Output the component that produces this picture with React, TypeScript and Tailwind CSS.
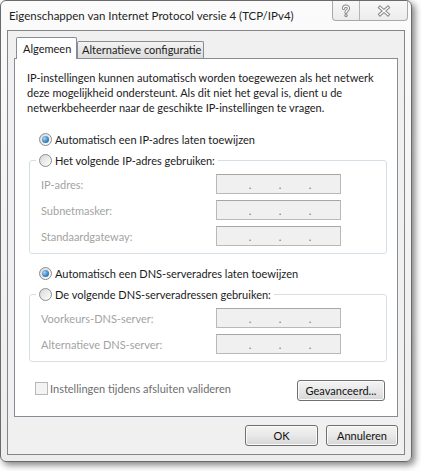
import React from "react";

const FONT = "font-['Lato',sans-serif]";

function Radio({ checked }: { checked?: boolean }) {
  return (
    <span className="w-[13px] h-[13px] rounded-full border border-[#8c8c8c] bg-gradient-to-br from-[#d8d8d8] to-[#ffffff] flex items-center justify-center shrink-0">
      {checked && (
        <span className="w-[7px] h-[7px] rounded-full bg-[radial-gradient(circle_at_35%_35%,#a8d4f5_0%,#3b86c8_55%,#1d5a9a_100%)]" />
      )}
    </span>
  );
}

function IpField() {
  return (
    <div className="w-[125px] h-[20px] border border-[#b9b9b9] border-t-[#a6a6a6] bg-[#f0f0f0] flex items-end pl-[18px] pb-[1px] text-[#777] leading-[14px]">
      <span className="w-[30px] text-center">.</span>
      <span className="w-[30px] text-center">.</span>
      <span className="w-[30px] text-center">.</span>
    </div>
  );
}

function FieldRow({ label }: { label: string }) {
  return (
    <div className="flex items-center h-[20px]">
      <span className="w-[175px] text-[#a3a3a3]">{label}</span>
      <IpField />
    </div>
  );
}

function Button({ children, w }: { children: React.ReactNode; w: string }) {
  return (
    <div
      className={`${w} h-[21px] rounded-[3px] border border-[#707070] bg-gradient-to-b from-[#f4f4f4] via-[#e8e8e8] to-[#d6d6d6] flex items-center justify-center text-[#111] shadow-[inset_0_0_0_1px_#fbfbfb]`}
    >
      {children}
    </div>
  );
}

function Group({ title, rows }: { title: string; rows: string[] }) {
  return (
    <fieldset className="ml-[14px] w-[358px] border border-[#d5dfe5] rounded-[3px] px-[11px] pt-[6px] pb-[7px] flex flex-col gap-[6px]">
      <legend className="ml-[-5px] px-[3px] h-[16px] flex items-center gap-[3px]">
        <Radio />
        <span>{title}</span>
      </legend>
      {rows.map((r) => (
        <FieldRow key={r} label={r} />
      ))}
    </fieldset>
  );
}

export default function App() {
  return (
    <div className={`w-[421px] h-[471px] bg-white ${FONT} text-[11px] text-[#1b1b1b] leading-[15px]`}>
      {/* window */}
      <div className="w-[412px] h-[462px] rounded-[6px] border border-[#6a6a6a] bg-gradient-to-b from-[#fbfbfb] to-[#ececec] shadow-[3px_3px_7px_rgba(0,0,0,0.5)] flex flex-col">
        {/* title bar */}
        <div className="h-[29px] flex items-start justify-between pl-[8px]">
          <span className="mt-[7px] text-[11.5px] text-[#1e1e1e] whitespace-nowrap">
            Eigenschappen van Internet Protocol versie 4 (TCP/IPv4)
          </span>
          <div className="mr-[3px] h-[20px] flex border border-t-0 border-[#a9a9a9] rounded-b-[4px] bg-gradient-to-b from-[#f8f8f8] to-[#ececec]">
            <div className="w-[27px] flex items-center justify-center border-r border-[#b5b5b5]">
              <svg width="10" height="14" viewBox="0 0 10 14">
                <path d="M2.5 4.5 C2.5 1.5 7.5 1.5 7.5 4.2 C7.5 6.2 5 6.4 5 8.6" fill="none" stroke="#8a8a8a" strokeWidth="3.2" strokeLinecap="round" />
                <circle cx="5" cy="11.6" r="1.7" fill="#8a8a8a" />
                <path d="M2.5 4.5 C2.5 1.5 7.5 1.5 7.5 4.2 C7.5 6.2 5 6.4 5 8.6" fill="none" stroke="#ffffff" strokeWidth="1.2" strokeLinecap="round" />
                <circle cx="5" cy="11.6" r="0.6" fill="#ffffff" />
              </svg>
            </div>
            <div className="w-[47px] flex items-center justify-center">
              <svg width="14" height="12" viewBox="0 0 14 12">
                <path d="M3 2.5 L11 9.5 M11 2.5 L3 9.5" stroke="#8a8a8a" strokeWidth="3.4" strokeLinecap="square" />
                <path d="M3 2.5 L11 9.5 M11 2.5 L3 9.5" stroke="#ffffff" strokeWidth="1.4" strokeLinecap="square" />
              </svg>
            </div>
          </div>
        </div>

        {/* client area */}
        <div className="mx-[6px] h-[425px] border border-[#858585] bg-[#f0f0f0] px-[6px] pt-[6px]">
          {/* tabs */}
          <div className="h-[21px] flex items-end pl-[2px]">
            <div className="relative z-10 w-[61px] h-[22px] -mb-px border border-b-0 border-[#898c95] rounded-t-[2px] bg-white pl-[6px] pt-[3px]">
              Algemeen
            </div>
            <div className="w-[127px] h-[17px] border border-b-0 border-[#898c95] rounded-t-[2px] bg-gradient-to-b from-[#f3f3f3] to-[#dcdcdc] pl-[4px] leading-[16px]">
              Alternatieve configuratie
            </div>
          </div>

          {/* tab panel */}
          <div className="h-[359px] border border-[#898c95] bg-white flex flex-col">
            <p className="pl-[12px] pt-[11px] whitespace-nowrap">
              IP-instellingen kunnen automatisch worden toegewezen als het netwerk
              <br />
              deze mogelijkheid ondersteunt. Als dit niet het geval is, dient u de
              <br />
              netwerkbeheerder naar de geschikte IP-instellingen te vragen.
            </p>

            <div className="mt-[16px] ml-[24px] h-[16px] flex items-center gap-[3px]">
              <Radio checked />
              <span>Automatisch een IP-adres laten toewijzen</span>
            </div>

            <div className="mt-[5px]">
              <Group
                title="Het volgende IP-adres gebruiken:"
                rows={["IP-adres:", "Subnetmasker:", "Standaardgateway:"]}
              />
            </div>

            <div className="mt-[11px] ml-[24px] h-[16px] flex items-center gap-[3px]">
              <Radio checked />
              <span>Automatisch een DNS-serveradres laten toewijzen</span>
            </div>

            <div className="mt-[5px]">
              <Group
                title="De volgende DNS-serveradressen gebruiken:"
                rows={["Voorkeurs-DNS-server:", "Alternatieve DNS-server:"]}
              />
            </div>

            <div className="mt-[18px] pl-[20px] pr-[12px] flex items-start justify-between">
              <div className="mt-[1px] flex items-center gap-[2px]">
                <span className="w-[13px] h-[13px] border border-[#b8b8b8] bg-[#f3f3f3]" />
                <span className="text-[#6d6d6d]">Instellingen tijdens afsluiten valideren</span>
              </div>
              <Button w="w-[88px]">Geavanceerd...</Button>
            </div>
          </div>

          {/* dialog buttons */}
          <div className="mt-[8px] flex justify-end gap-[8px]">
            <Button w="w-[73px]">OK</Button>
            <Button w="w-[72px]">Annuleren</Button>
          </div>
        </div>
      </div>
    </div>
  );
}
